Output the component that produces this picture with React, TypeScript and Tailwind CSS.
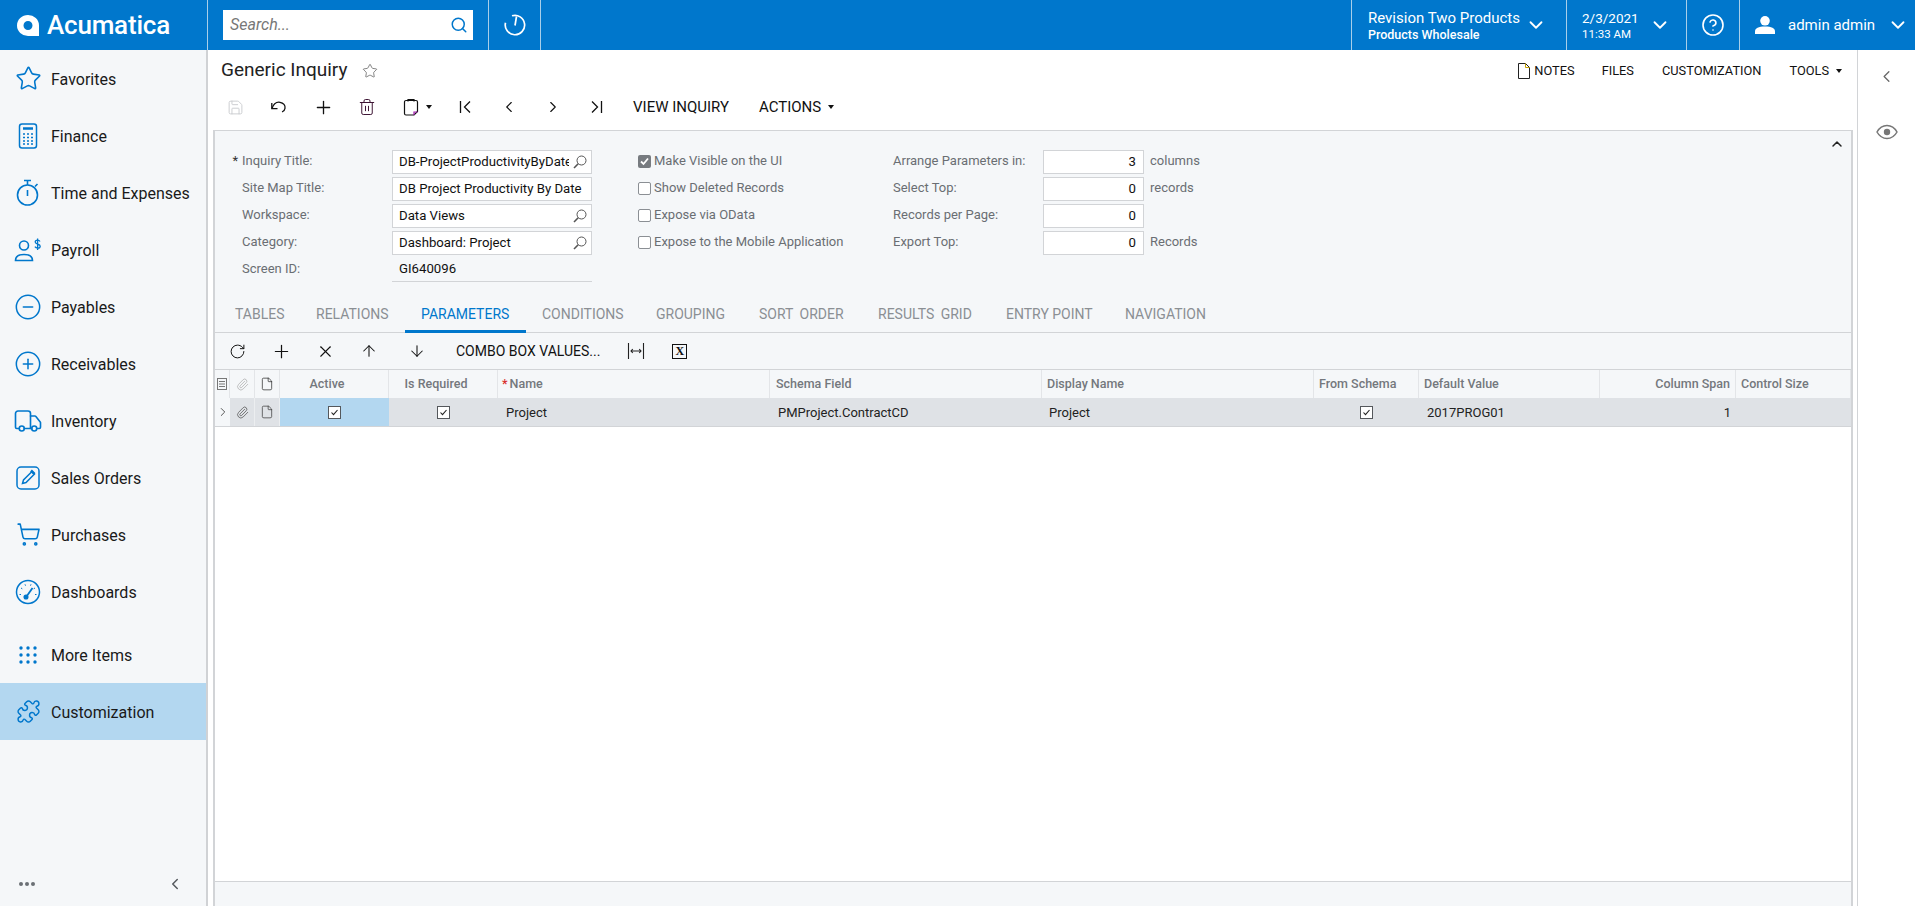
import { Fragment, type ReactNode } from "react";
import {
  Star,
  CircleMinus,
  CirclePlus,
  Truck,
  ShoppingCart,
  Puzzle,
  Search,
  ChevronDown,
  ChevronLeft,
  ChevronRight,
  ChevronUp,
  CircleHelp,
  Plus,
  Trash2,
  Save,
  X,
  ArrowUp,
  ArrowDown,
  RotateCw,
  Paperclip,
  File,
} from "lucide-react";

const BLUE = "#0077cc";

// small svgs that the icon packs don't have in the right shape
function Calc() {
  return (
    <svg width="24" height="26" viewBox="0 0 24 26" fill="none" stroke={BLUE} strokeWidth="1.5">
      <rect x="3.5" y="1" width="17" height="24" rx="2.5" />
      <path d="M7 5.500h10" strokeWidth="2.500" />
      <path d="M7 11h2M11 11h2M15 11h2M7 14.500h2M11 14.500h2M15 14.500h2M7 18h2M11 18h2M15 18h2M7 21h2M11 21h2M15 21h2" strokeWidth="1.600" />
    </svg>
  );
}

function Stopwatch() {
  return (
    <svg width="24" height="28" viewBox="0 0 24 28" fill="none" stroke={BLUE} strokeWidth="1.600">
      <circle cx="11.500" cy="16" r="10" />
      <path d="M8 1.500h7M11.500 1.500v4.500M19 7.500l2.500-2.500M11.500 11v6" />
    </svg>
  );
}

function PayrollIcon() {
  return (
    <svg width="28" height="24" viewBox="0 0 28 24" fill="none" stroke={BLUE} strokeWidth="1.6">
      <circle cx="10" cy="7.500" r="4.500" />
      <path d="M1.500 22.500c0-4 3-6 8.500-6s8.500 2 8.500 6z" />
      <path d="M26 3.500c-.6-1-1.500-1.300-2.500-1.300-1.300 0-2.300.7-2.300 1.900 0 2.600 5 1.400 5 4.100 0 1.200-1.100 1.900-2.500 1.900-1.200 0-2.200-.5-2.800-1.400M23.600.5v11.500" strokeWidth="1.300" />
    </svg>
  );
}

function EditBox() {
  return (
    <svg width="24" height="24" viewBox="0 0 24 24" fill="none" stroke={BLUE} strokeWidth="1.5">
      <rect x="1" y="1" width="22" height="22" rx="4" />
      <path d="M6.500 17.500l1-3.500 8.500-8.500 2.500 2.500-8.500 8.500z" />
      <path d="M15 4.500l3.500 3.500" strokeWidth="2.500" />
    </svg>
  );
}

function GaugeIcon() {
  return (
    <svg width="26" height="26" viewBox="0 0 26 26" fill="none" stroke={BLUE} strokeWidth="1.500">
      <circle cx="13" cy="13" r="11.500" />
      <path d="M4.500 15.500h1.500M6 9l1.300.8M10 5.300l.5 1.400M16 5.300l-.5 1.400M20 9l-1.300.8M21.500 15.500H20" strokeWidth="1" />
      <path d="M11.500 17.500L17.500 9" strokeWidth="1.800" />
      <circle cx="11" cy="18" r="1.800" fill={BLUE} />
    </svg>
  );
}

function Dots() {
  const pts = [0, 1, 2];
  return (
    <svg width="18" height="18" viewBox="0 0 18 18" fill={BLUE}>
      {pts.map((y) =>
        pts.map((x) => <circle key={`${x}-${y}`} cx={2 + x * 7} cy={2 + y * 7} r="1.700" />)
      )}
    </svg>
  );
}

function Logo() {
  return (
    <svg width="22" height="21" viewBox="0 0 22 21">
      <path fillRule="evenodd" fill="#fff" d="M11 0a11 10.500 0 0 1 11 10.500V21H11A11 10.500 0 0 1 11 0zm0 6a4.500 4.500 0 1 0 0 9 4.500 4.500 0 0 0 0-9z" />
    </svg>
  );
}

function RecentIcon() {
  return (
    <svg width="24" height="24" viewBox="0 0 24 24" fill="none" stroke="#fff" strokeWidth="1.700">
      <path d="M9 2.800a9.700 9.700 0 1 1-6.500 7" />
      <path d="M13.500 3.500L12 12.500" />
    </svg>
  );
}

function UserIcon() {
  return (
    <svg width="20" height="18" viewBox="0 0 20 18" fill="#fff">
      <circle cx="10" cy="4.800" r="4.800" />
      <path d="M0 18v-2.500C0 12 3.500 10.500 10 10.500s10 1.500 10 5V18z" />
    </svg>
  );
}

function EyeIcon() {
  return (
    <svg width="22" height="16" viewBox="0 0 22 16" fill="none" stroke="#777" strokeWidth="1.500">
      <path d="M1 8c2.500-4.500 6-6.500 10-6.500S18.500 3.500 21 8c-2.500 4.500-6 6.500-10 6.500S3.500 12.500 1 8z" />
      <circle cx="11" cy="8" r="3.200" fill="#777" stroke="none" />
    </svg>
  );
}

function UndoIcon() {
  return (
    <svg width="18" height="18" viewBox="0 0 18 18" fill="none" stroke="#111" strokeWidth="1.300">
      <path d="M2 10.500C3.500 6 6.500 3.800 10 4.300c3.500.5 5.500 3.200 5 6-.3 1.800-1.500 3.200-3 3.700" />
      <path d="M1.800 5v5.700h5.700" />
    </svg>
  );
}

function Magnifier({ className = "" }: { className?: string }) {
  return (
    <svg className={className} width="14" height="14" viewBox="0 0 14 14" fill="none" stroke="#555" strokeWidth="1">
      <circle cx="8.500" cy="5.500" r="4.500" />
      <path d="M5.200 8.800L1 13" strokeWidth="1.600" />
    </svg>
  );
}

function Caret() {
  return <span className="ml-[7px] inline-block border-x-[3.5px] border-t-[4px] border-x-transparent border-t-[#111]" />;
}

function Clipboard() {
  return (
    <svg width="16" height="18" viewBox="0 0 16 18" fill="none" stroke="#111" strokeWidth="1.200">
      <path d="M3 2.500h10a1.500 1.500 0 0 1 1.500 1.500v9.500l-3.500 3.500H3a1.500 1.500 0 0 1-1.500-1.500V4A1.500 1.500 0 0 1 3 2.500z" />
      <path d="M5 3.500V1.500h6v2" />
      <path d="M11 17v-3h3.500" stroke="#a21caf" />
    </svg>
  );
}

function FirstIcon({ flip = false }: { flip?: boolean }) {
  return (
    <svg className={flip ? "rotate-180" : ""} width="14" height="14" viewBox="0 0 14 14" fill="none" stroke="#111" strokeWidth="1.300">
      <path d="M2.500 1v12M12 1.500L6.500 7l5.500 5.500" />
    </svg>
  );
}

function FitIcon() {
  return (
    <svg width="18" height="16" viewBox="0 0 18 16" fill="none" stroke="#222" strokeWidth="1.100">
      <path d="M1.500 0v16M16.500 0v16M4 8h10M5.800 6L4 8l1.800 2M12.200 6L14 8l-1.800 2" />
    </svg>
  );
}

function ExcelIcon() {
  return (
    <span className="flex h-[15px] w-[15px] items-center justify-center border-[1.5px] border-[#111] font-['Liberation_Serif',serif] text-[12px] leading-none font-bold text-[#111]">
      X
    </span>
  );
}

function CheckBox({ checked = false }: { checked?: boolean }) {
  return (
    <span
      className={
        checked
          ? "flex h-[13px] w-[13px] items-center justify-center rounded-[2px] bg-[#777b80]"
          : "h-[13px] w-[13px] rounded-[2px] border border-[#8b8f94] bg-white"
      }
    >
      {checked && (
        <svg width="11" height="11" viewBox="0 0 11 11" fill="none" stroke="#fff" strokeWidth="1.800">
          <path d="M2 5.500l2.500 2.500L9 2.500" />
        </svg>
      )}
    </span>
  );
}

function GridCheck() {
  return (
    <span className="flex h-[13px] w-[13px] items-center justify-center border border-[#55585c] bg-white">
      <svg width="9" height="9" viewBox="0 0 9 9" fill="none" stroke="#222" strokeWidth="1.100">
        <path d="M1.500 4.500l2 2.200L7.500 2" />
      </svg>
    </span>
  );
}

const navItems: { label: string; icon: ReactNode }[] = [
  { label: "Favorites", icon: <Star size={27} color={BLUE} strokeWidth={1.4} /> },
  { label: "Finance", icon: <Calc /> },
  { label: "Time and Expenses", icon: <Stopwatch /> },
  { label: "Payroll", icon: <PayrollIcon /> },
  { label: "Payables", icon: <CircleMinus size={28} color={BLUE} strokeWidth={1.3} /> },
  { label: "Receivables", icon: <CirclePlus size={28} color={BLUE} strokeWidth={1.3} /> },
  { label: "Inventory", icon: <Truck size={30} color={BLUE} strokeWidth={1.3} /> },
  { label: "Sales Orders", icon: <EditBox /> },
  { label: "Purchases", icon: <ShoppingCart size={25} color={BLUE} strokeWidth={1.5} /> },
  { label: "Dashboards", icon: <GaugeIcon /> },
];

function NavItem({ label, icon, active = false }: { label: string; icon: ReactNode; active?: boolean }) {
  return (
    <div className={active ? "flex h-[57px] items-center bg-[#b3d7f0]" : "flex h-[57px] items-center"}>
      <div className="flex w-[51px] shrink-0 items-center justify-center pl-[5px]">{icon}</div>
      <span className="pt-[2px] text-[16px] text-[#1a1a1a]">{label}</span>
    </div>
  );
}

function Sidebar() {
  return (
    <aside className="flex w-[208px] shrink-0 flex-col border-r-2 border-[#d0d2d5] bg-[#f5f7f9]">
      {navItems.map((n) => (
        <NavItem key={n.label} label={n.label} icon={n.icon} />
      ))}
      <div className="h-[6px]" />
      <NavItem label="More Items" icon={<Dots />} />
      <NavItem label="Customization" icon={<Puzzle size={25} color={BLUE} strokeWidth={1.4} />} active />
      <div className="mt-auto flex h-[44px] items-center justify-between pr-[22px] pl-[19px]">
        <div className="flex gap-[2px]">
          <span className="h-[4px] w-[4px] rounded-full bg-[#6b7075]" />
          <span className="h-[4px] w-[4px] rounded-full bg-[#6b7075]" />
          <span className="h-[4px] w-[4px] rounded-full bg-[#6b7075]" />
        </div>
        <ChevronLeft size={18} color="#55595e" strokeWidth={2} />
      </div>
    </aside>
  );
}

function Header() {
  return (
    <header className="flex h-[50px] shrink-0 bg-[#0077cc] text-white">
      <div className="flex w-[208px] items-center gap-[8px] border-r border-[#a8cfea] pl-[17px]">
        <Logo />
        <span className="text-[26px] font-medium tracking-[-0.2px]">Acumatica</span>
      </div>
      <div className="flex w-[281px] items-center border-r border-[#a8cfea] pl-[15px]">
        <div className="flex h-[30px] w-[250px] items-center justify-between bg-white pr-[5px] pl-[7px]">
          <span className="text-[16px] text-[#777] italic">Search...</span>
          <Search size={18} color={BLUE} strokeWidth={2} />
        </div>
      </div>
      <div className="flex w-[52px] items-center justify-center border-r border-[#a8cfea]">
        <RecentIcon />
      </div>
      <div className="flex-1 border-r border-[#a8cfea]" />
      <div className="flex w-[215px] items-center border-r border-[#a8cfea] pl-[16px]">
        <div className="w-[152px] shrink-0">
          <div className="text-[15px] leading-[18px]">Revision Two Products</div>
          <div className="text-[12.5px] leading-[15px] font-medium">Products Wholesale</div>
        </div>
        <ChevronDown size={22} className="ml-[5px] shrink-0" />
      </div>
      <div className="flex w-[120px] items-center border-r border-[#a8cfea] pl-[15px]">
        <div className="w-[66px] shrink-0">
          <div className="text-[13.5px] leading-[18px]">2/3/2021</div>
          <div className="text-[11.5px] leading-[15px]">11:33 AM</div>
        </div>
        <ChevronDown size={22} className="ml-[1px] shrink-0" />
      </div>
      <div className="flex w-[53px] items-center justify-center border-r border-[#a8cfea]">
        <CircleHelp size={24} strokeWidth={1.6} />
      </div>
      <div className="flex w-[175px] items-center pl-[15px]">
        <UserIcon />
        <span className="ml-[13px] text-[15px] whitespace-nowrap">admin admin</span>
        <ChevronDown size={22} className="ml-[12px] shrink-0" />
      </div>
    </header>
  );
}

function ToolButton({ children }: { children: ReactNode }) {
  return <div className="flex h-[32px] w-[44px] items-center justify-center">{children}</div>;
}

function TitleBar() {
  return (
    <div className="flex h-[41px] items-center pr-[15px] pl-[13px]">
      <span className="text-[19px] text-[#222]">Generic Inquiry</span>
      <Star size={16} color="#666" strokeWidth={1.2} className="ml-[15px]" />
      <div className="ml-auto flex items-center text-[12.8px] text-[#111]">
        <svg width="14" height="16" viewBox="0 0 14 16" fill="none" stroke="#222" strokeWidth="1">
          <path d="M1.500.5h7l4 4v11h-11z" />
          <path d="M8.500.5v4h4" stroke="#c9a200" />
        </svg>
        <span className="ml-[3px]">NOTES</span>
        <span className="ml-[27px]">FILES</span>
        <span className="ml-[28px]">CUSTOMIZATION</span>
        <span className="ml-[28px]">TOOLS</span>
        <Caret />
      </div>
    </div>
  );
}

function MainToolbar() {
  return (
    <div className="flex h-[32px] items-center pl-[5px] text-[15px] text-[#111]">
      <ToolButton>
        <Save size={17} color="#c9cbce" strokeWidth={1.3} />
      </ToolButton>
      <ToolButton>
        <UndoIcon />
      </ToolButton>
      <ToolButton>
        <Plus size={21} color="#111" strokeWidth={1.5} />
      </ToolButton>
      <ToolButton>
        <Trash2 size={18} color="#3a1030" strokeWidth={1.3} />
      </ToolButton>
      <div className="flex h-[32px] w-[54px] items-center pl-[14px]">
        <Clipboard />
        <Caret />
      </div>
      <ToolButton>
        <FirstIcon />
      </ToolButton>
      <ToolButton>
        <ChevronLeft size={18} strokeWidth={1.5} />
      </ToolButton>
      <ToolButton>
        <ChevronRight size={18} strokeWidth={1.5} />
      </ToolButton>
      <ToolButton>
        <FirstIcon flip />
      </ToolButton>
      <span className="ml-[14px]">VIEW INQUIRY</span>
      <span className="ml-[30px]">ACTIONS</span>
      <Caret />
    </div>
  );
}

function Field({ value, search = false, right = false }: { value: string; search?: boolean; right?: boolean }) {
  return (
    <div
      className={
        right
          ? "flex h-[24px] w-[101px] items-center justify-end border border-[#d2d4d7] bg-white pr-[7px] text-[13.2px] text-[#111]"
          : "flex h-[24px] w-[200px] items-center border border-[#d2d4d7] bg-white pr-[4px] pl-[6px] text-[13.2px] text-[#111]"
      }
    >
      <span className={right ? "flex-1 text-right whitespace-nowrap" : "flex-1 overflow-hidden whitespace-nowrap"}>{value}</span>
      {search && <Magnifier className="ml-[4px] shrink-0" />}
    </div>
  );
}

function FormPanel() {
  const labels = ["Inquiry Title:", "Site Map Title:", "Workspace:", "Category:", "Screen ID:"];
  const checks: [string, boolean][] = [
    ["Make Visible on the UI", true],
    ["Show Deleted Records", false],
    ["Expose via OData", false],
    ["Expose to the Mobile Application", false],
  ];
  const numbers: [string, string, string][] = [
    ["Arrange Parameters in:", "3", "columns"],
    ["Select Top:", "0", "records"],
    ["Records per Page:", "0", ""],
    ["Export Top:", "0", "Records"],
  ];
  return (
    <div className="flex h-[170px] pt-[17px] text-[13px] text-[#6a6e73]">
      <div className="grid w-[378px] shrink-0 grid-cols-[177px_200px] auto-rows-[27px] items-center">
        {labels.map((l, i) => (
          <Fragment key={l}>
            <div className="flex items-center pb-[2px]">
              <span className="w-[27px] pr-[4px] text-right text-[#333]">{i === 0 ? "*" : ""}</span>
              <span>{l}</span>
            </div>
            {i < 4 ? (
              <Field
                value={["DB-ProjectProductivityByDate", "DB Project Productivity By Date", "Data Views", "Dashboard: Project"][i]}
                search={i !== 1}
              />
            ) : (
              <div className="flex h-[24px] items-center border-b border-[#d2d4d7] pl-[7px] text-[13.2px] text-[#111]">GI640096</div>
            )}
          </Fragment>
        ))}
      </div>
      <div className="ml-[45px] grid w-[255px] shrink-0 auto-rows-[27px] items-center">
        {checks.map(([l, on]) => (
          <div key={l} className="flex items-center gap-[3px]">
            <CheckBox checked={on} />
            <span className="pb-[2px]">{l}</span>
          </div>
        ))}
      </div>
      <div className="grid grid-cols-[150px_101px_auto] auto-rows-[27px] items-center gap-x-0">
        {numbers.map(([l, n, u]) => (
          <Fragment key={l}>
            <span className="pb-[2px]">{l}</span>
            <Field value={n} right />
            <span className="pb-[2px] pl-[6px]">{u}</span>
          </Fragment>
        ))}
      </div>
      <ChevronUp size={16} color="#222" strokeWidth={2.2} className="mt-[-12px] ml-auto mr-[6px]" />
    </div>
  );
}

// tab widths are fixed because the text is a little narrower than in the reference
const tabs = [
  { label: "TABLES", cls: "w-[81px]" },
  { label: "RELATIONS", cls: "w-[105px]" },
  { label: "PARAMETERS", cls: "w-[121px]" },
  { label: "CONDITIONS", cls: "w-[114px]" },
  { label: "GROUPING", cls: "w-[103px]" },
  { label: "SORT ORDER", cls: "w-[119px] [word-spacing:3px]" },
  { label: "RESULTS GRID", cls: "w-[128px] [word-spacing:3px]" },
  { label: "ENTRY POINT", cls: "w-[119px]" },
  { label: "NAVIGATION", cls: "w-[100px]" },
];

function Tabs() {
  return (
    <div className="flex h-[32px] border-b border-[#d2d4d7] pl-[4px] text-[14px]">
      {tabs.map((t) => (
        <div
          key={t.label}
          className={
            t.label === "PARAMETERS"
              ? `-mb-px flex items-center border-b-[3px] border-[#0077cc] pb-[2px] pl-[16px] whitespace-nowrap text-[#0077cc] ${t.cls}`
              : `-mb-px flex items-center border-b-[3px] border-transparent pb-[2px] pl-[16px] whitespace-nowrap text-[#8b8f94] ${t.cls}`
          }
        >
          {t.label}
        </div>
      ))}
    </div>
  );
}

function GridToolbar() {
  return (
    <div className="flex h-[36px] items-center text-[14px] text-[#111]">
      <ToolButton>
        <RotateCw size={17} strokeWidth={1.4} />
      </ToolButton>
      <ToolButton>
        <Plus size={21} strokeWidth={1.4} />
      </ToolButton>
      <ToolButton>
        <X size={19} strokeWidth={1.4} />
      </ToolButton>
      <ToolButton>
        <ArrowUp size={18} strokeWidth={1.4} />
      </ToolButton>
      <div className="ml-[4px]">
        <ToolButton>
          <ArrowDown size={18} strokeWidth={1.4} />
        </ToolButton>
      </div>
      <span className="ml-[17px]">COMBO BOX VALUES...</span>
      <div className="ml-[27px] flex w-[18px] justify-center">
        <FitIcon />
      </div>
      <div className="ml-[27px]">
        <ExcelIcon />
      </div>
    </div>
  );
}

const gridCols = "grid grid-cols-[15px_25px_25px_109px_109px_272px_272px_272px_105px_181px_136px_1fr]";

function HeadCell({ children, className = "" }: { children?: ReactNode; className?: string }) {
  return <div className={`flex items-center border-r border-[#e3e5e8] ${className}`}>{children}</div>;
}

function Grid() {
  return (
    <>
      <div className={`${gridCols} h-[29px] border-t border-[#d2d4d7] bg-[#f5f7f9] text-[12.500px] font-medium text-[#74787d]`}>
        <HeadCell className="justify-center">
          <svg width="10" height="12" viewBox="0 0 10 12" fill="none" stroke="#777" strokeWidth="1">
            <rect x="0.500" y="0.500" width="9" height="11" />
            <path d="M2 3.500h6M2 6h6M2 8.500h6" />
          </svg>
        </HeadCell>
        <HeadCell className="justify-center">
          <Paperclip size={13} color="#aaa" strokeWidth={1.3} />
        </HeadCell>
        <HeadCell className="justify-center">
          <File size={14} color="#222" strokeWidth={1.2} />
        </HeadCell>
        <HeadCell className="justify-center pr-[14px]">Active</HeadCell>
        <HeadCell className="justify-center pr-[14px]">Is Required</HeadCell>
        <HeadCell className="pl-[4px]">
          <span className="mr-[2px] text-[#d9302c]">*</span>Name
        </HeadCell>
        <HeadCell className="pl-[6px]">Schema Field</HeadCell>
        <HeadCell className="pl-[5px]">Display Name</HeadCell>
        <HeadCell className="pl-[5px]">From Schema</HeadCell>
        <HeadCell className="pl-[5px]">Default Value</HeadCell>
        <HeadCell className="justify-end pr-[5px]">Column Span</HeadCell>
        <HeadCell className="pl-[5px]">Control Size</HeadCell>
      </div>
      <div className={`${gridCols} h-[29px] border-b border-[#d2d4d7] bg-[#dfe2e6] text-[13px] text-[#222]`}>
        <div className="flex items-center justify-center bg-[#f5f7f9]">
          <ChevronRight size={14} color="#555" strokeWidth={1.7} />
        </div>
        <div className="flex items-center justify-center border-r border-[#eceef0]">
          <Paperclip size={13} color="#555" strokeWidth={1.4} />
        </div>
        <div className="flex items-center justify-center border-r border-[#eceef0]">
          <File size={14} color="#333" strokeWidth={1.2} />
        </div>
        <div className="flex items-center justify-center bg-[#b3d7f0]">
          <GridCheck />
        </div>
        <div className="flex items-center justify-center">
          <GridCheck />
        </div>
        <div className="flex items-center pt-[2px] pl-[8px]">Project</div>
        <div className="flex items-center pt-[2px] pl-[8px]">PMProject.ContractCD</div>
        <div className="flex items-center pt-[2px] pl-[7px]">Project</div>
        <div className="flex items-center justify-center">
          <GridCheck />
        </div>
        <div className="flex items-center pt-[2px] pl-[8px]">2017PROG01</div>
        <div className="flex items-center justify-end pt-[2px] pr-[5px]">1</div>
        <div />
      </div>
    </>
  );
}

export default function App() {
  return (
    <div className="flex h-[906px] w-full flex-col overflow-hidden bg-white font-['Roboto',sans-serif]">
      <Header />
      <div className="flex flex-1 overflow-hidden">
        <Sidebar />
        <main className="flex flex-1 flex-col">
          <TitleBar />
          <MainToolbar />
          <div className="ml-[5px] mr-[4px] mt-[7px] flex flex-1 flex-col border-x-2 border-t border-[#d2d4d7]">
            <div className="bg-[#f5f7f9]">
              <FormPanel />
              <Tabs />
              <GridToolbar />
            </div>
            <Grid />
            <div className="flex-1" />
            <div className="h-[25px] border-t border-[#d2d4d7] bg-[#f5f7f9]" />
          </div>
        </main>
        <div className="flex w-[58px] shrink-0 flex-col items-center border-l border-[#d2d4d7] pt-[17px]">
          <ChevronLeft size={19} color="#666" strokeWidth={1.6} />
          <div className="mt-[38px]">
            <EyeIcon />
          </div>
        </div>
      </div>
    </div>
  );
}
